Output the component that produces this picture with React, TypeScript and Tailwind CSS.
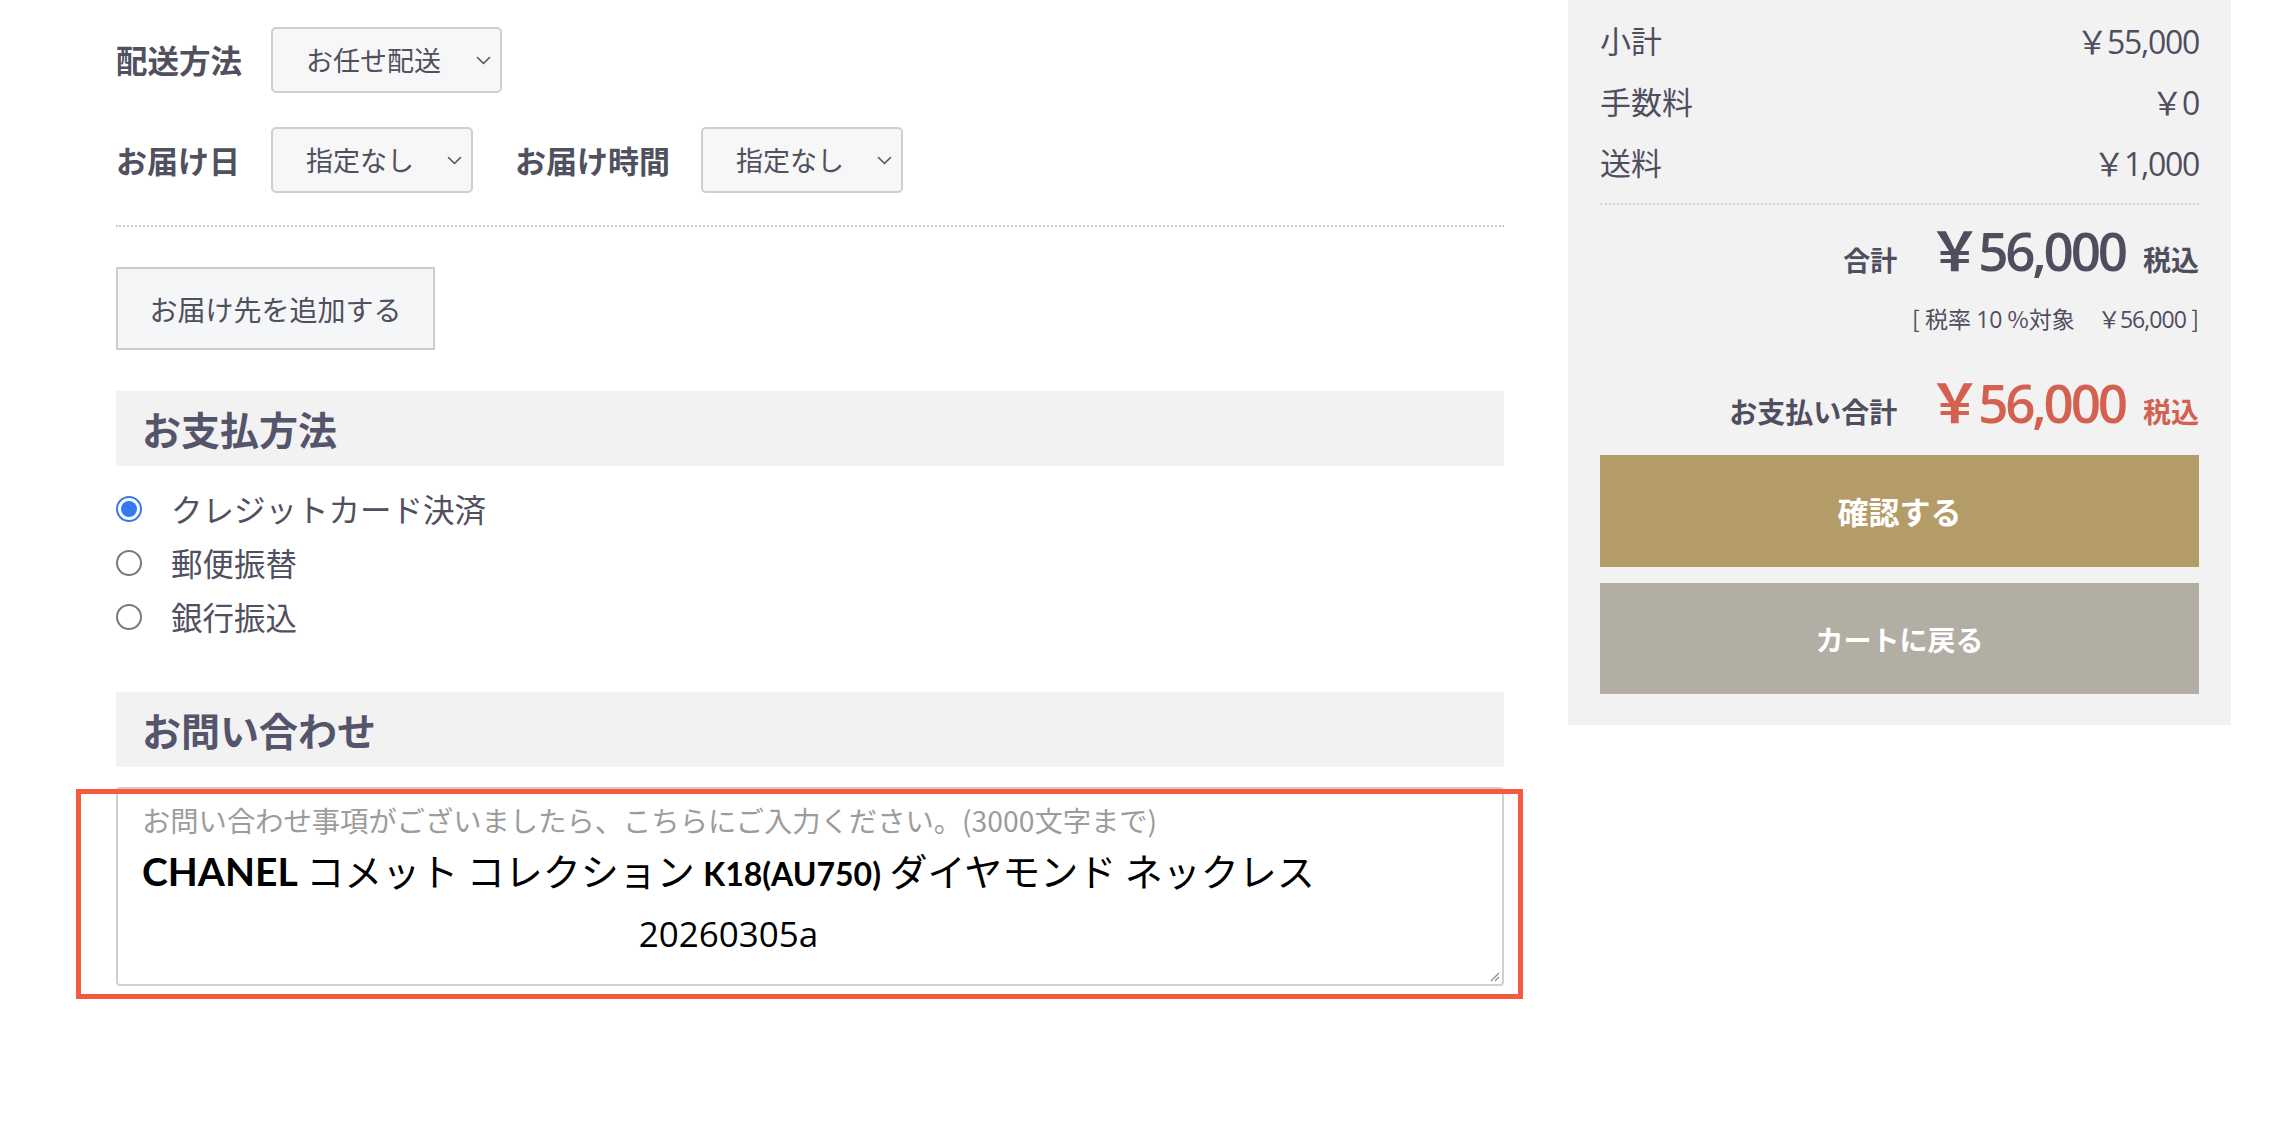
import React from 'react';

const jp = "font-['Noto_Sans_CJK_JP',sans-serif]";
const num = "font-['Open_Sans','Noto_Sans_CJK_JP',sans-serif]";

function Chevron() {
  return (
    <svg width="15" height="9" viewBox="0 0 15 9" fill="none">
      <path d="M1.5 1.5l6 6 6-6" stroke="#555" strokeWidth="1.6" strokeLinecap="round" strokeLinejoin="round" />
    </svg>
  );
}

function Select({ label, width }: { label: string; width: string }) {
  return (
    <div
      className={`flex h-[66px] items-center justify-between rounded-[5px] border-2 border-[#cfcfcf] bg-[#f7f7f7] pl-[33px] pr-[9px] text-[27px] text-[#505060] ${width}`}
    >
      <span>{label}</span>
      <Chevron />
    </div>
  );
}

function Radio({ checked, label }: { checked?: boolean; label: string }) {
  return (
    <div className="flex h-[54px] items-center">
      {checked ? (
        <span className="flex h-[26px] w-[26px] items-center justify-center rounded-full border-2 border-[#3478f6] bg-white">
          <span className="h-[16px] w-[16px] rounded-full bg-[#3478f6]" />
        </span>
      ) : (
        <span className="h-[26px] w-[26px] rounded-full border-2 border-[#7a7a7a] bg-white" />
      )}
      <span className="ml-[29px] text-[31.5px] text-[#50505f]">{label}</span>
    </div>
  );
}

function SectionTitle({ children }: { children: React.ReactNode }) {
  return (
    <div className="flex h-[75px] items-center bg-[#f2f2f2] pl-[26px] text-[39px] font-bold text-[#54546a]">
      {children}
    </div>
  );
}

function Yen({ value, className }: { value: string; className?: string }) {
  return (
    <span className={`${num} ${className ?? 'tracking-[-0.04em]'}`}>
      <span className={jp}>￥</span>
      {value}
    </span>
  );
}

export default function App() {
  return (
    <div className={`relative h-[1133px] w-[2272px] overflow-hidden bg-white ${jp}`}>
      <div className="flex items-start pl-[116px]">
        {/* left column */}
        <div className="w-[1388px] text-[#50505f]">
          <div className="mt-[27px] flex items-center">
            <span className="mr-[29px] text-[31.5px] font-bold">配送方法</span>
            <Select label="お任せ配送" width="w-[231px]" />
          </div>
          <div className="mt-[34px] flex items-center">
            <span className="mr-[31px] text-[31px] font-bold">お届け日</span>
            <Select label="指定なし" width="w-[202px]" />
            <span className="ml-[42px] mr-[31px] text-[31px] font-bold">お届け時間</span>
            <Select label="指定なし" width="w-[202px]" />
          </div>
          <div className="mt-[32px] border-t-2 border-dotted border-[#cccccc]" />
          <button className="mt-[40px] block h-[83px] w-[319px] border-2 border-[#cccccc] bg-[#f5f6f8] text-[28px] text-[#4f4f5e]">
            お届け先を追加する
          </button>

          <div className="mt-[41px]">
            <SectionTitle>お支払方法</SectionTitle>
          </div>
          <div className="mt-[16px]">
            <Radio checked label="クレジットカード決済" />
            <Radio label="郵便振替" />
            <Radio label="銀行振込" />
          </div>

          <div className="mt-[48px]">
            <SectionTitle>お問い合わせ</SectionTitle>
          </div>

          <div className="relative mt-[20px] h-[199px] rounded-[4px] border-2 border-[#cfcfcf] bg-white pl-[24px] pt-[11px]">
            <div className="text-[28.3px] leading-[40px] text-[#9c9c9c]">
              お問い合わせ事項がございましたら、こちらにご入力ください。(3000文字まで)
            </div>
            <div className="inline-flex flex-col items-center text-black">
              <div className="whitespace-nowrap text-[38px] leading-[60px]">
                <span className="font-['Lato',sans-serif] text-[39px] font-bold">CHANEL</span> コメット コレクション{' '}
                <span className="font-['Lato',sans-serif] text-[32px] font-bold">K18(AU750)</span> ダイヤモンド ネックレス
              </div>
              <div className="font-['Open_Sans',sans-serif] text-[35px] leading-[60px]">20260305a</div>
            </div>
            <svg className="absolute bottom-[2px] right-[2px]" width="12" height="12" viewBox="0 0 12 12">
              <path d="M11 3L3 11M11 7L7 11" stroke="#8a8a8a" strokeWidth="1.2" />
            </svg>
            <div className="pointer-events-none absolute -bottom-[15px] -left-[42px] -right-[21px] top-0 border-[5px] border-[#f55a40]" />
          </div>
        </div>

        {/* summary panel */}
        <div className="ml-[64px] w-[663px] bg-[#f2f2f2] px-[32px] pb-[31px] pt-[10px] text-[#4f4e5f]">
          <div className="flex h-[61px] items-center justify-between text-[31px]">
            <span>小計</span>
            <Yen value="55,000" className="text-[32px] tracking-[-0.04em]" />
          </div>
          <div className="flex h-[61px] items-center justify-between text-[31px]">
            <span>手数料</span>
            <Yen value="0" className="text-[32px] tracking-[-0.04em]" />
          </div>
          <div className="flex h-[61px] items-center justify-between text-[31px]">
            <span>送料</span>
            <Yen value="1,000" className="text-[32px] tracking-[-0.04em]" />
          </div>
          <div className="mt-[10px] border-t-2 border-dotted border-[#d2d2d2]" />

          <div className="mt-[17px] flex h-[60px] items-baseline justify-end leading-none">
            <span className="text-[27px] font-bold">合計</span>
            <Yen value="56,000" className="ml-[31px] text-[53px] font-semibold tracking-[-0.06em]" />
            <span className="ml-[18px] text-[28px] font-bold">税込</span>
          </div>
          <div className="mt-[21px] text-right text-[23px] leading-[30px]">
            [ 税率 <span className={num}>10</span> %対象　<Yen value="56,000" /> ]
          </div>
          <div className="mt-[40px] flex h-[60px] items-baseline justify-end leading-none">
            <span className="text-[28px] font-bold">お支払い合計</span>
            <Yen value="56,000" className="ml-[31px] text-[53px] font-semibold tracking-[-0.06em] text-[#d4614f]" />
            <span className="ml-[18px] text-[28px] font-bold text-[#d4614f]">税込</span>
          </div>

          <button className="mt-[21px] flex h-[112px] w-full items-center justify-center bg-[#b49c69] text-[31px] font-bold text-white">
            確認する
          </button>
          <button className="mt-[16px] flex h-[111px] w-full items-center justify-center bg-[#b2aea3] text-[28px] font-bold text-white">
            カートに戻る
          </button>
        </div>
      </div>
    </div>
  );
}
